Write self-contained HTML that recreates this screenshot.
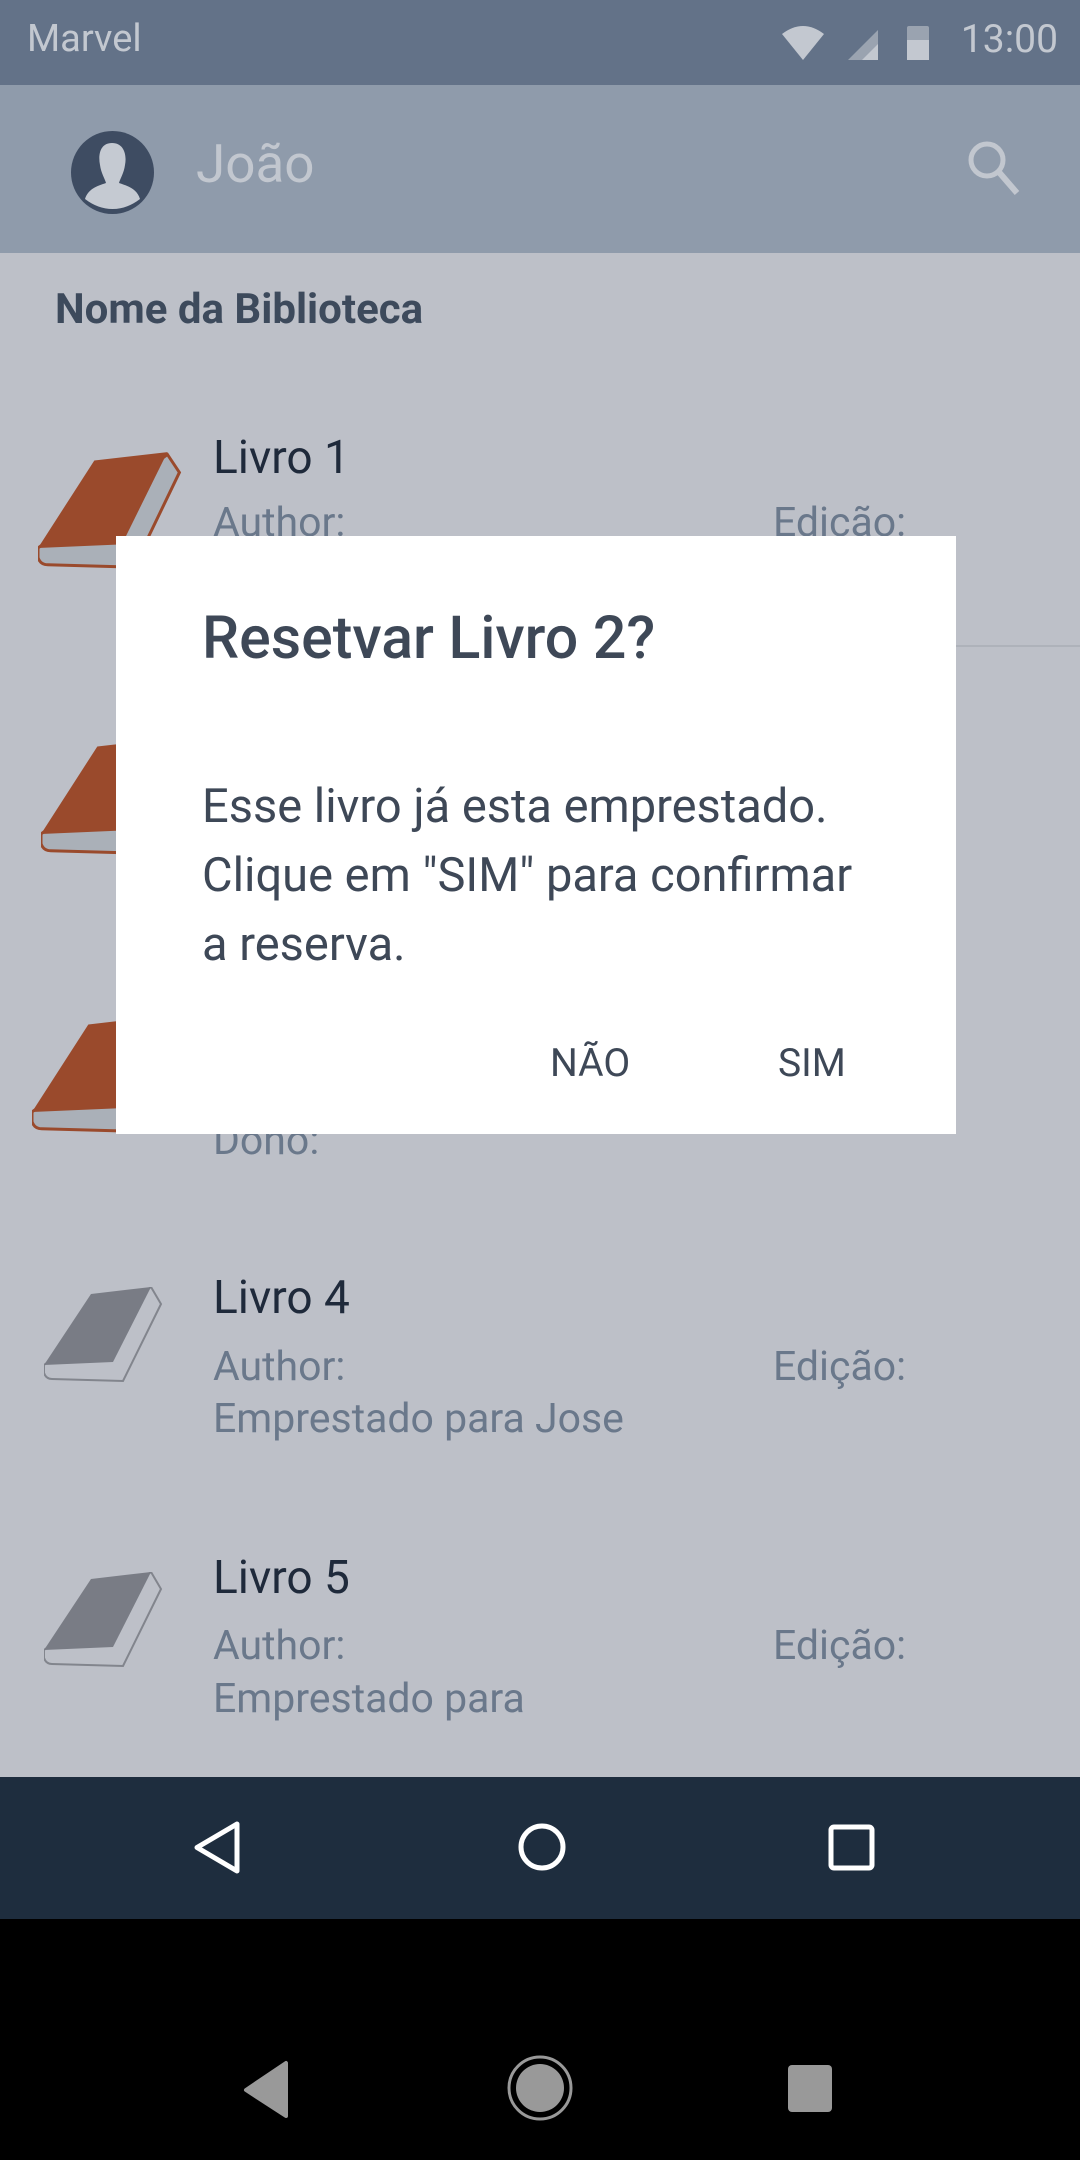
<!DOCTYPE html>
<html><head><meta charset="utf-8"><style>
*{margin:0;padding:0;box-sizing:border-box}
body{width:1080px;height:2160px;position:relative;overflow:hidden;background:#000;font-family:"Roboto","Liberation Sans",sans-serif}
.a{position:absolute;white-space:nowrap}
.t{font-size:46px;color:#1f2a3b}
.s{font-size:41px;color:#6a788b}
</style></head><body>
<div class="a" style="left:0;top:0;width:1080px;height:85px;background:#637288"></div>
<div class="a" style="left:27px;top:17px;font-size:38px;color:#c3c8d0">Marvel</div>
<svg class="a" style="left:780px;top:22px" width="160" height="40" viewBox="0 0 160 40">
<path d="M2 12 Q23 -4 44 12 L23 38 Z" fill="#c3c8d0"/>
<path d="M98 8 L98 38 L68 38 Z" fill="#9aa3b0"/><path d="M98 22 L98 38 L82 38 Z" fill="#c3c8d0"/>
<rect x="127" y="4" width="22" height="34" rx="2" fill="#9aa3b0"/><rect x="127" y="18" width="22" height="20" fill="#c3c8d0"/>
</svg>
<div class="a" style="right:22px;top:16px;font-size:39px;color:#c3c8d0">13:00</div>
<div class="a" style="left:0;top:85px;width:1080px;height:168px;background:#8f9bab"></div>
<svg class="a" style="left:71px;top:131px" width="83" height="83" viewBox="0 0 83 83">
<circle cx="41.5" cy="41.5" r="41.5" fill="#3e4c62"/>
<path d="M41 12 C29 12 27 24 29 34 C30 42 34 48 35 52 C26 55 17 58 14 68 Q27 78 41.5 78 Q56 78 69 68 C66 58 57 55 48 52 C49 48 53 42 54 34 C56 24 53 12 41 12Z" fill="#c5cad2"/>
</svg>
<div class="a" style="left:196px;top:133px;font-size:53px;color:#c2c7cf">João</div>
<svg class="a" style="left:965px;top:138px" width="60" height="60" viewBox="0 0 60 60">
<circle cx="22" cy="22" r="16" fill="none" stroke="#c2c7cf" stroke-width="5"/><path d="M33 33 L52 55" stroke="#c2c7cf" stroke-width="6"/>
</svg>
<div class="a" style="left:0;top:253px;width:1080px;height:1524px;background:#bdc0c8"></div>
<div class="a" style="left:55px;top:285px;font-size:42px;font-weight:bold;color:#3d4a5c">Nome da Biblioteca</div>
<div class="a" style="left:213px;top:645px;width:867px;height:2px;background:#aeb2ba"></div>

<svg width="0" height="0" style="position:absolute"><defs>
<g id="bo"><path d="M0 80 L0 88 Q2 94 8 94 L80 96 L118 17 L108 2 Z" fill="#aab0b8" stroke="#9a4a2c" stroke-width="2.5"/><path d="M47 7 L108 0 L70 77 L0 80 Z" fill="#9a4a2c"/></g>
<g id="bg"><path d="M0 78 L0 86 Q2 92 8 92 L79 94 L117 17 L107 0 Z" fill="#bdc0c8" stroke="#82858d" stroke-width="2"/><path d="M47 7 L107 0 L69 75 L0 78 Z" fill="#797c85"/></g>
</defs></svg>
<svg class="a" style="left:38px;top:452px" width="145" height="120" viewBox="0 0 121 100"><use href="#bo"/></svg>
<svg class="a" style="left:41px;top:738px" width="145" height="120" viewBox="0 0 121 100"><use href="#bo"/></svg>
<svg class="a" style="left:32px;top:1016px" width="145" height="120" viewBox="0 0 121 100"><use href="#bo"/></svg>
<svg class="a" style="left:44px;top:1287px" width="120" height="98" viewBox="0 0 120 98"><use href="#bg"/></svg>
<svg class="a" style="left:44px;top:1572px" width="120" height="98" viewBox="0 0 120 98"><use href="#bg"/></svg>

<div class="a t" style="left:213px;top:431px">Livro 1</div>
<div class="a s" style="left:213px;top:499px">Author:</div>
<div class="a s" style="left:773px;top:499px">Edição:</div>
<div class="a s" style="left:213px;top:1117px">Dono:</div>
<div class="a t" style="left:213px;top:1271px">Livro 4</div>
<div class="a s" style="left:213px;top:1343px">Author:</div>
<div class="a s" style="left:773px;top:1343px">Edição:</div>
<div class="a s" style="left:213px;top:1395px">Emprestado para Jose</div>
<div class="a t" style="left:213px;top:1551px">Livro 5</div>
<div class="a s" style="left:213px;top:1622px">Author:</div>
<div class="a s" style="left:773px;top:1622px">Edição:</div>
<div class="a s" style="left:213px;top:1675px">Emprestado para</div>

<div class="a" style="left:116px;top:536px;width:840px;height:598px;background:#fff"></div>
<div class="a" style="left:202px;top:604px;font-size:59px;font-weight:500;color:#3e4857">Resetvar Livro 2?</div>
<div class="a" style="left:202px;top:772px;font-size:47px;line-height:69px;color:#3e4857">Esse livro já esta emprestado.<br>Clique em "SIM" para confirmar<br>a reserva.</div>
<div class="a" style="left:550px;top:1040px;font-size:39px;color:#3e4857">NÃO</div>
<div class="a" style="left:778px;top:1040px;font-size:39px;color:#3e4857">SIM</div>

<div class="a" style="left:0;top:1777px;width:1080px;height:142px;background:#1e2d3e"></div>
<svg class="a" style="left:0;top:1777px" width="1080" height="142" viewBox="0 0 1080 142">
<path d="M237 47 L237 94 L197 70.5 Z" fill="none" stroke="#fff" stroke-width="5" stroke-linejoin="round"/>
<circle cx="542" cy="70" r="21" fill="none" stroke="#fff" stroke-width="5"/>
<rect x="831" y="50" width="41" height="41" rx="3" fill="none" stroke="#fff" stroke-width="5"/>
</svg>
<svg class="a" style="left:0;top:2030px" width="1080" height="120" viewBox="0 0 1080 120">
<path d="M286 33 L286 86 L246 60 Z" fill="#999" stroke="#999" stroke-width="4" stroke-linejoin="round"/>
<circle cx="540" cy="58" r="31" fill="none" stroke="#999" stroke-width="3"/><circle cx="540" cy="58" r="24" fill="#999"/>
<rect x="788" y="35" width="44" height="47" rx="4" fill="#999"/>
</svg>
</body></html>
